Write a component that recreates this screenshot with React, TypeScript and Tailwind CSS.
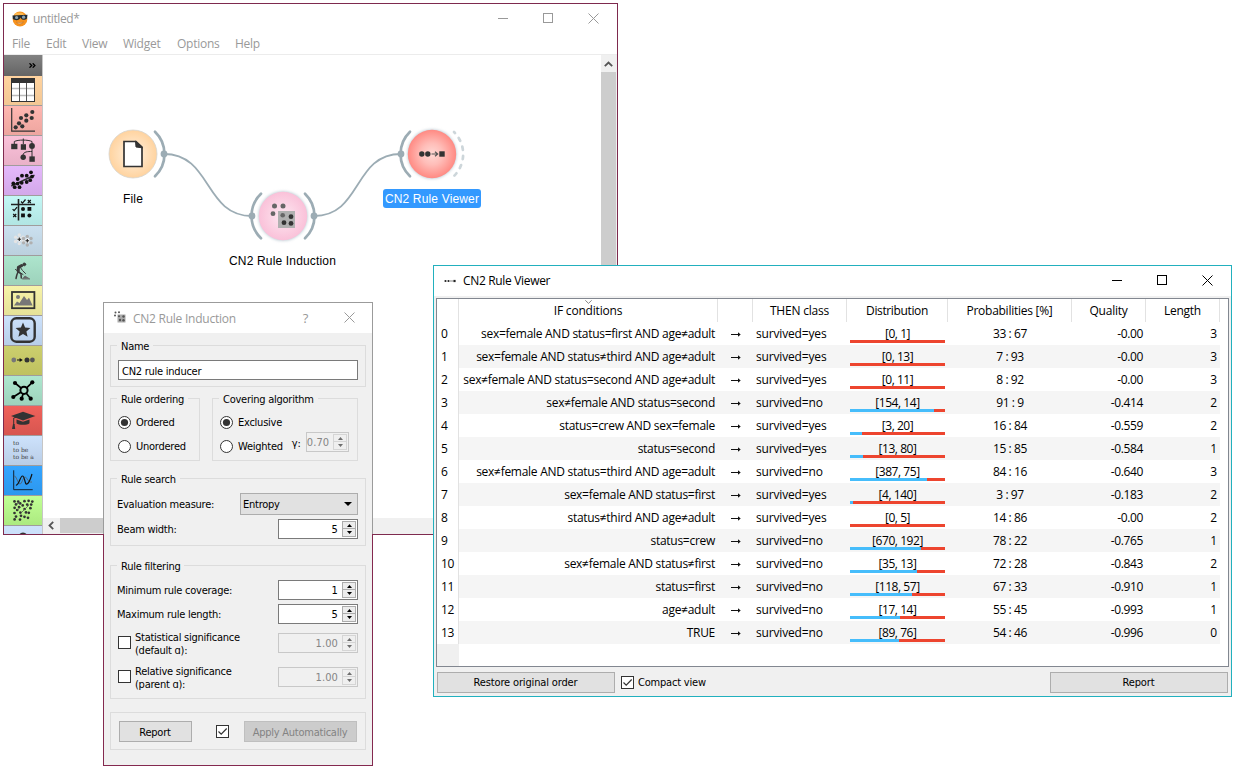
import type { ReactNode } from "react";

const OPEN = "font-['Open_Sans','Noto_Sans',sans-serif]";
const DEJA = "font-['DejaVu_Sans_Condensed','DejaVu_Sans',sans-serif]";

/* ---------- window chrome ---------- */

function CloseIcon() {
  return (
    <svg width="11" height="11" viewBox="0 0 11 11" stroke="currentColor" strokeWidth="1">
      <path d="M0.5 0.5L10.5 10.5M10.5 0.5L0.5 10.5" />
    </svg>
  );
}

function CaptionButtons() {
  return (
    <div className="flex items-center">
      <svg width="10" height="11" viewBox="0 0 10 11" className="mr-[35px]">
        <rect x="0" y="5" width="10" height="1" fill="currentColor" />
      </svg>
      <svg width="11" height="11" viewBox="0 0 11 11" className="mr-[34px]" fill="none" stroke="currentColor">
        <rect x="0.5" y="0.5" width="9" height="9" />
      </svg>
      <CloseIcon />
    </div>
  );
}

/* ---------- toolbox icons ---------- */

function Dots({ pts, r }: { pts: number[][]; r: number }) {
  return (
    <>
      {pts.map(([x, y], i) => (
        <circle key={i} cx={x} cy={y} r={r} />
      ))}
    </>
  );
}

function Flower({ x, y, fill }: { x: number; y: number; fill: string }) {
  return (
    <g>
      {[30, 90, 150, 210, 270, 330].map((a) => (
        <circle
          key={a}
          cx={x + 4.3 * Math.cos((a * Math.PI) / 180)}
          cy={y + 4.3 * Math.sin((a * Math.PI) / 180)}
          r="1.7"
          fill={fill}
        />
      ))}
      <circle cx={x} cy={y} r="2.4" fill="#f2f2f2" />
      <path d={`M${x - 1.8} ${y}h3.6M${x} ${y - 1.8}v3.6`} stroke="#222" strokeWidth="1.1" />
    </g>
  );
}

const tools: { bg: string; icon: ReactNode }[] = [
  {
    bg: "from-[#ffd39f] to-[#f3c794]",
    icon: (
      <g>
        <rect x="7.5" y="2.5" width="23" height="23" fill="#fff" stroke="#333" />
        <rect x="7" y="2" width="24" height="5" fill="#333" />
        <path d="M8 12.5h22M8 19.5h22" stroke="#bbb" strokeWidth="1.6" />
        <path d="M15.5 7v18M22.5 7v18" stroke="#555" />
      </g>
    ),
  },
  {
    bg: "from-[#ffb7b1] to-[#eda59f]",
    icon: (
      <g fill="#333">
        <path d="M7.7 2v23.2H31" fill="none" stroke="#333" strokeWidth="1.2" />
        <Dots r={2.1} pts={[[28.3, 6], [22.3, 9.3], [27.7, 12], [17, 12], [22.3, 14.7], [15, 17.3], [11.7, 21.3], [18.3, 20.3]]} />
      </g>
    ),
  },
  {
    bg: "from-[#fac1d9] to-[#e9b1c8]",
    icon: (
      <g fill="#333">
        <path d="M10.3 8V5.5C14 3.6 24 3.6 28 5.5V8M19.3 2.5V8M28 13v8M28 15.5c-4 0-9 0-9 4" fill="none" stroke="#333" />
        <rect x="7.2" y="7.8" width="6.2" height="5.4" />
        <rect x="16.8" y="8.2" width="5.2" height="5.6" />
        <circle cx="28" cy="10" r="2.9" />
        <circle cx="19.2" cy="21.3" r="2.7" />
        <rect x="25.4" y="20.4" width="5.4" height="5.4" />
      </g>
    ),
  },
  {
    bg: "from-[#e4b8fb] to-[#d3a8ea]",
    icon: (
      <g fill="#111">
        <path d="M7.3 20L30.5 9.3" stroke="#333" strokeWidth="1.6" />
        <Dots r={1.9} pts={[[27, 6.3], [18, 9.7], [22.7, 9.7], [28, 10.6], [13.7, 13], [9.3, 17.4], [10.7, 21.2], [15.5, 21.2], [17.7, 16.8], [22.7, 16], [26.2, 14.2], [13.6, 17.6]]} />
      </g>
    ),
  },
  {
    bg: "from-[#c3f7f5] to-[#b1e5e3]",
    icon: (
      <g fill="#111">
        <path d="M7 8.5h24M14.5 3v21.5" stroke="#222" strokeWidth="1.6" />
        <path d="M17 5.5l1.5 1.6 3-3.6M8.6 13.1l1.5 1.6 3-3.6M23.8 4l3 3M26.8 4l-3 3M9.2 18l3 3M12.2 18l-3 3" fill="none" stroke="#111" strokeWidth="1.2" />
        <circle cx="19" cy="12.9" r="2" />
        <rect x="23.5" y="11" width="3.8" height="3.8" />
        <rect x="17.1" y="17.5" width="3.8" height="3.8" />
        <circle cx="25.4" cy="19.4" r="2" />
      </g>
    ),
  },
  {
    bg: "from-[#cbe0ef] to-[#bbd0de]",
    icon: (
      <g>
        <Flower x={15.3} y={13.3} fill="#e4e4e4" />
        <Flower x={23.3} y={14.7} fill="#b0b0b0" />
      </g>
    ),
  },
  {
    bg: "from-[#ade5cd] to-[#9dd2bb]",
    icon: (
      <g fill="none" stroke="#3a3a3a" strokeLinecap="round" strokeLinejoin="round">
        <circle cx="20.3" cy="8.4" r="1.4" fill="#3a3a3a" />
        <path d="M17.6 9.6L14.4 11.3L14.2 15.2" strokeWidth="3" />
        <path d="M14 16L12.800 19L12 22.500M14.500 16L17 18L17.300 22" strokeWidth="1.5" />
        <path d="M16 11L18.500 14.500L21.500 17.500M11.500 13.500L19 18.500" strokeWidth="1" />
        <path d="M18.500 22.800L21 20L25.500 22.800Z" fill="#666" stroke="#666" strokeWidth="0.8" />
      </g>
    ),
  },
  {
    bg: "from-[#f7f3a9] to-[#e6e298]",
    icon: (
      <g>
        <rect x="8" y="6" width="22.4" height="16.2" fill="none" stroke="#333" strokeWidth="1.8" />
        <circle cx="14" cy="11" r="2" fill="#777" />
        <path d="M10 19.5l3-4 2.5 1.6 4.5-7 3 3.8 2-2.2 3.6 7.8z" fill="#777" />
      </g>
    ),
  },
  {
    bg: "from-[#cde2fc] to-[#b7cee9]",
    icon: (
      <g>
        <rect x="7.3" y="2.3" width="23.4" height="23.4" rx="5" fill="none" stroke="#333" strokeWidth="2.4" />
        <path d="M19 6.6l2.1 4.9 5.3.5-4 3.5 1.2 5.2-4.6-2.8-4.6 2.8 1.2-5.2-4-3.5 5.3-.5z" fill="#333" />
      </g>
    ),
  },
  {
    bg: "from-[#cccf6e] to-[#bfc15f]",
    icon: (
      <g fill="#333">
        <circle cx="9.8" cy="14" r="2.4" fill="#777" />
        <path d="M13 13.4h2.6v-1.5l3.2 2.1-3.2 2.1v-1.5H13z" fill="#111" />
        <circle cx="23" cy="14" r="2.5" />
        <circle cx="28.4" cy="14" r="2.4" fill="#555" />
      </g>
    ),
  },
  {
    bg: "from-[#aee7cf] to-[#9dd3bc]",
    icon: (
      <g fill="#000">
        <path d="M11 7l9 7.3L28.3 6.3M9.3 21l10.7-6.7M17.7 22.7L20 14.3l6.7 8.4" fill="none" stroke="#000" strokeWidth="1.7" />
        <Dots r={2.1} pts={[[11, 7], [28.3, 6.3], [9.3, 21], [17.7, 22.7], [26.7, 22.7]]} />
        <circle cx="20" cy="14.3" r="3.6" fill="#a8dfc8" stroke="#000" strokeWidth="2" />
      </g>
    ),
  },
  {
    bg: "from-[#f0625b] to-[#d75650]",
    icon: (
      <g fill="#333">
        <path d="M7 10l12-4.2L31.3 10 19 14.4z" />
        <path d="M12.5 13.5L19 15.8l6.5-2.3v3.8c-2 2-11 2-13 0z" />
        <path d="M13 11L9.7 12v7" fill="none" stroke="#333" />
        <path d="M9 18h1.6l.6 5H8z" />
      </g>
    ),
  },
  {
    bg: "from-[#cde2fc] to-[#b9cde6]",
    icon: (
      <g fill="#444" className="font-['DejaVu_Serif','Liberation_Serif',serif] text-[6px]">
        <text x="9" y="9.3">to</text>
        <text x="9" y="15.8">to be</text>
        <text x="9" y="22.5">to be a</text>
      </g>
    ),
  },
  {
    bg: "from-[#35a5ff] to-[#2c97ee]",
    icon: (
      <g fill="none">
        <path d="M9.7 4.3v19.4h19" stroke="#123" />
        <path d="M10 10c2-1 4 8 6 8s3-7 5-7 3 6 7 5" stroke="#567" />
        <path d="M12 19c3 1 4-9 6.5-9s2 9 4.500 8S27 11 28 8" stroke="#111" strokeWidth="1.2" />
      </g>
    ),
  },
  {
    bg: "from-[#c1ff95] to-[#acea80]",
    icon: (
      <g fill="#333">
        <Dots r={1.35} pts={[[10.5, 5.4], [14.2, 5.6], [20.5, 5.2], [24.6, 4.8], [28.3, 5.6], [12, 8.4], [16.2, 7.4], [27.2, 8.6], [10.6, 11.8], [15, 11], [18.7, 9.4], [23.2, 8.6], [13.2, 14], [20.6, 13], [26.4, 12.2], [10.5, 17], [16.4, 16.6], [22, 16.4], [12, 20.6], [17, 19.8], [24.800, 16.8], [20.5, 20.8], [10.6, 23.4], [16, 23.6], [24, 21.8]]} />
        <path d="M12 8l4-1M13 14l4-3M21 13l4-4M17 17l4-4" stroke="#555" strokeWidth="0.8" />
      </g>
    ),
  },
  {
    bg: "from-[#cde2fc] to-[#c6dbf6]",
    icon: <circle cx="19" cy="10.500" r="4" fill="#333" />,
  },
];

/* ---------- main canvas window ---------- */

const menus = [
  ["File", "w-[34px]"],
  ["Edit", "w-[36px]"],
  ["View", "w-[41px]"],
  ["Widget", "w-[54px]"],
  ["Options", "w-[58px]"],
  ["Help", "w-[40px]"],
];

function Workflow() {
  return (
    <div className="relative flex-1 overflow-hidden bg-white">
      <svg width="558" height="463" viewBox="43 55 558 463" className="block max-w-none" fill="none">
        <defs>
          <radialGradient id="gFile">
            <stop offset="0" stopColor="#fff2e2" />
            <stop offset="1" stopColor="#ffd39f" />
          </radialGradient>
          <radialGradient id="gRule">
            <stop offset="0" stopColor="#fde8f1" />
            <stop offset="1" stopColor="#fac1d9" />
          </radialGradient>
          <radialGradient id="gView">
            <stop offset="0" stopColor="#ffd8d4" />
            <stop offset="0.45" stopColor="#ffbdb8" />
            <stop offset="1" stopColor="#ff8a83" />
          </radialGradient>
          <filter id="glow" x="-30%" y="-30%" width="160%" height="160%">
            <feGaussianBlur stdDeviation="1.6" />
          </filter>
        </defs>
        <g stroke="#9cacb4" strokeWidth="1.8">
          <path d="M164 154C212 154 204 216 252 216" />
          <path d="M314 216C362 216 353 154 401 154" />
        </g>
        <g stroke="#9cacb4" strokeWidth="2.7" strokeLinecap="round">
          <path d="M155 131.700A31 31 0 0 1 155 176.300" />
          <path d="M261 193.700A31 31 0 0 0 261 238.300" />
          <path d="M305 193.700A31 31 0 0 1 305 238.300" />
          <path d="M410 131.700A31 31 0 0 0 410 176.300" />
          <path d="M454 132A31 31 0 0 1 454 176" stroke="#cdd6da" strokeDasharray="3.2 6.1" strokeDashoffset="1.6" />
        </g>
        <g fill="#9cacb4">
          <circle cx="164" cy="154" r="3.400" />
          <circle cx="252" cy="216" r="3.400" />
          <circle cx="314" cy="216" r="3.400" />
          <circle cx="401" cy="154" r="3.400" />
        </g>
        <circle cx="283" cy="216" r="24.500" fill="#b9c7d0" filter="url(#glow)" />
        <circle cx="432" cy="154" r="24.500" fill="#b9c7d0" filter="url(#glow)" />
        <circle cx="133" cy="154" r="24" fill="url(#gFile)" stroke="#d6d4cf" strokeWidth="0.8" />
        <circle cx="283" cy="216" r="24.200" fill="url(#gRule)" />
        <circle cx="432" cy="154" r="24.200" fill="url(#gView)" />
        <path d="M124 141.500H136L142 147V166.500H124Z" fill="#fff" stroke="#333" strokeWidth="1.7" />
        <path d="M135.500 141L142.500 147.800L136 147Z" fill="#333" stroke="#333" />
        <rect x="278" y="211" width="17" height="17" fill="#b0b0b0" />
        <g fill="#666">
          <circle cx="274.500" cy="206" r="2.500" />
          <circle cx="283" cy="206" r="2.500" />
          <circle cx="273" cy="213.700" r="2.400" />
          <circle cx="282.700" cy="215.200" r="2.300" />
        </g>
        <g fill="#333">
          <circle cx="291" cy="216.700" r="2.400" />
          <circle cx="284" cy="222.700" r="2.400" />
          <circle cx="291" cy="223.400" r="2.400" />
          <circle cx="421.800" cy="154" r="2.700" />
          <circle cx="427.800" cy="154" r="2.700" />
          <rect x="439.300" y="151.300" width="5.400" height="5.400" />
        </g>
        <path d="M431.500 154H437.500M435 151.800L437.700 154L435 156.200" stroke="#555" strokeWidth="1.200" />
      </svg>
      <div className="absolute inset-0 font-['Liberation_Sans',Arial,sans-serif] text-[12px] leading-[19px] tracking-[0.16px] text-black">
        <div className="absolute top-[135px] left-[40px] w-[100px] text-center">File</div>
        <div className="absolute top-[197px] left-[169px] w-[141px] text-center">CN2 Rule Induction</div>
        <div className="absolute top-[134px] left-[340px] h-[19px] w-[98px] rounded-[3px] bg-[#3399ff] pt-px text-center text-white">CN2 Rule Viewer</div>
      </div>
    </div>
  );
}

function MainWindow() {
  return (
    <div className={`absolute top-[3px] left-[3px] flex h-[532px] w-[615px] flex-col border border-[#7e2a4e] bg-white text-[12px] text-[#999] ${OPEN}`}>
      <div className="flex h-[30px] shrink-0 items-center pr-[18px] pl-[8px]">
        <svg width="16" height="16" viewBox="0 0 16 16">
          <circle cx="8" cy="8" r="7.400" fill="#f6921e" />
          <ellipse cx="7" cy="3.400" rx="4.500" ry="2" fill="#ffb84d" />
          <path d="M0.500 4.500L15.500 3.700L15 7.500C13 9.500 9.500 9.300 8.500 6.500C7.500 9.800 3 10 0.800 7.800Z" fill="#222c33" />
          <circle cx="4.600" cy="6.500" r="1.600" fill="#8fa3ad" />
          <circle cx="11.600" cy="6.200" r="1.600" fill="#8fa3ad" />
          <path d="M4.500 11.300Q8 14.500 11.500 11.100Q8 12.300 4.500 11.300Z" fill="#fff3d6" stroke="#a8540c" strokeWidth="0.400" />
        </svg>
        <span className="ml-[5px] tracking-[-0.4px]">untitled*</span>
        <div className="ml-auto -mt-[1px]"><CaptionButtons /></div>
      </div>
      <div className="flex h-[21px] shrink-0 items-center border-b border-[#ececec] pl-[8px] tracking-[-0.25px]">
        {menus.map(([m, w]) => (
          <span key={m} className={w}>{m}</span>
        ))}
      </div>
      <div className="flex min-h-0 flex-1">
        <div className="flex w-[39px] shrink-0 flex-col overflow-hidden border-r border-[#c6c6c6]">
          <div className="flex h-[21px] shrink-0 items-center justify-end bg-linear-to-b from-[#828282] to-[#646464] pr-[6px]">
            <svg width="7" height="5" viewBox="0 0 7 5" fill="none" stroke="#000" strokeWidth="1.300">
              <path d="M0.500 0.300L2.700 2.500L0.500 4.700M3.700 0.300L5.900 2.500L3.700 4.700" />
            </svg>
          </div>
          {tools.map((t, i) => (
            <div key={i} className={`h-[30px] shrink-0 border-b border-[#a09c9c] bg-linear-to-b ${t.bg}`}>
              <svg width="38" height="29" viewBox="0 0 38 29" className="block">{t.icon}</svg>
            </div>
          ))}
        </div>
        <div className="flex min-w-0 flex-1 flex-col">
          <div className="flex min-h-0 flex-1">
            <Workflow />
            <div className="w-[16px] shrink-0 border-r border-[#f0f0f0] bg-[#cdcdcd]">
              <div className="flex h-[17px] items-center justify-center bg-[#f0f0f0]">
                <svg width="9" height="6" viewBox="0 0 9 6" fill="none" stroke="#555" strokeWidth="1.800">
                  <path d="M0.800 5.200L4.500 1.500L8.200 5.200" />
                </svg>
              </div>
            </div>
          </div>
          <div className="flex h-[16px] shrink-0 border-b border-[#f0f0f0] bg-[#f0f0f0]">
            <div className="flex w-[17px] items-center justify-center pr-[2px]">
              <svg width="6" height="9" viewBox="0 0 6 9" fill="none" stroke="#555" strokeWidth="1.800">
                <path d="M5.200 0.800L1.500 4.500L5.200 8.200" />
              </svg>
            </div>
            <div className="w-[280px] bg-[#cdcdcd]" />
          </div>
        </div>
      </div>
    </div>
  );
}

/* ---------- form controls ---------- */

function Group({ title, className, children }: { title?: string; className: string; children: ReactNode }) {
  return (
    <div className={`border border-[#dcdcdc] ${className}`}>
      {title && (
        <div className="-mt-[7px] mb-[-8px] ml-[6px] flex h-[15px]">
          <span className="bg-[#f0f0f0] px-[4px] leading-[15px]">{title}</span>
        </div>
      )}
      {children}
    </div>
  );
}

function Spin({ value, disabled, className = "w-[80px]" }: { value: string; disabled?: boolean; className?: string }) {
  const tone = disabled ? "border-[#c8c8c8] text-[#858585] bg-[#f0f0f0]" : "border-[#7a7a7a] text-black bg-white";
  const btn = disabled ? "border-[#d5d5d5] bg-[#efefef]" : "border-[#acacac] bg-[#ececec]";
  const arrow = disabled ? "#6e6e6e" : "#000";
  return (
    <div className={`flex h-[20px] shrink-0 items-center border pr-[1px] ${tone} ${className}`}>
      <span className="flex-1 pt-px pr-[4px] text-right tracking-[0.1px]">{value}</span>
      <div className="flex w-[14px] flex-col">
        <div className={`flex h-[8px] items-center justify-center border ${btn}`}>
          <svg width="5" height="3" viewBox="0 0 5 3"><path d="M0 3L2.500 0L5 3Z" fill={arrow} /></svg>
        </div>
        <div className={`flex h-[8px] items-center justify-center border border-t-0 ${btn}`}>
          <svg width="5" height="3" viewBox="0 0 5 3"><path d="M0 0L2.500 3L5 0Z" fill={arrow} /></svg>
        </div>
      </div>
    </div>
  );
}

function Check({ on }: { on?: boolean }) {
  return (
    <svg width="13" height="13" viewBox="0 0 13 13" fill="none" className="shrink-0">
      <rect x="0.500" y="0.500" width="12" height="12" fill="#fff" stroke="#333" />
      {on && <path d="M2.500 6.500L5.200 9.200L10.700 3.500" stroke="#333" strokeWidth="1.200" />}
    </svg>
  );
}

function Radio({ label, on }: { label: string; on?: boolean }) {
  return (
    <div className="flex h-[14px] items-center">
      <svg width="13" height="13" viewBox="0 0 13 13" className="mr-[5px] shrink-0">
        <circle cx="6.500" cy="6.500" r="6" fill="#fff" stroke="#333" />
        {on && <circle cx="6.500" cy="6.500" r="3.600" fill="#333" />}
      </svg>
      <span>{label}</span>
    </div>
  );
}

function Button({ children, className, disabled }: { children: ReactNode; className: string; disabled?: boolean }) {
  const tone = disabled ? "border-[#bfbfbf] bg-[#cccccc] text-[#838383]" : "border-[#adadad] bg-[#e1e1e1] text-black";
  return <div className={`flex h-[21px] items-center justify-center border pt-[2px] pr-px ${tone} ${className}`}>{children}</div>;
}

/* ---------- rule induction dialog ---------- */

function InductionDialog() {
  return (
    <div className="absolute top-[302px] left-[103px] h-[464px] w-[270px] bg-linear-to-b from-[#9b9b9b] from-50% to-[#84294f] to-50% p-px">
      <div className={`flex h-full flex-col bg-[#f0f0f0] text-[11px] leading-[13px] tracking-[-0.25px] text-black ${DEJA}`}>
        <div className={`flex h-[30px] shrink-0 items-center bg-white pr-[17px] pl-[11px] text-[12px] text-[#999] ${OPEN}`}>
          <svg width="12" height="12" viewBox="0 0 12 12" fill="#555" className="-mt-[2px] -ml-px">
            <rect x="3.500" y="3.500" width="8" height="8" fill="#aaa" />
            <circle cx="1.500" cy="1.500" r="1" /><circle cx="5" cy="1.200" r="1" /><circle cx="1" cy="4.500" r="1" />
            <circle cx="5" cy="5.200" r="1" /><circle cx="9.500" cy="5.500" r="1.200" /><circle cx="6" cy="9" r="1.200" /><circle cx="9.500" cy="9.300" r="1.200" />
          </svg>
          <span className="ml-[7px] tracking-[-0.25px]">CN2 Rule Induction</span>
          <span className="ml-auto mr-[36px] text-[13px]">?</span>
          <div className="-mt-[2px]"><CloseIcon /></div>
        </div>
        <div className="flex flex-col pl-[6px]">
          <Group title="Name" className="mt-[12px] h-[42px] w-[256px]">
            <div className="mt-[14px] ml-[7px] flex h-[20px] w-[240px] items-center border border-[#7a7a7a] bg-white pt-[2px] pl-[3px]">CN2 rule inducer</div>
          </Group>
          <div className="mt-[11px] flex gap-[12px]">
            <Group title="Rule ordering" className="h-[63px] w-[90px]">
              <div className="mt-[16px] ml-[7px] flex flex-col gap-[10px]">
                <Radio label="Ordered" on />
                <Radio label="Unordered" />
              </div>
            </Group>
            <Group title="Covering algorithm" className="h-[63px] w-[146px]">
              <div className="mt-[16px] ml-[7px] flex flex-col gap-[7px]">
                <Radio label="Exclusive" on />
                <div className="flex h-[20px] items-center">
                  <Radio label="Weighted" />
                  <span className="ml-[9px] -mt-[6px] w-[14px] shrink-0">γ:</span>
                  <div className="-mt-[8px]"><Spin value="0.70" disabled className="w-[43px]" /></div>
                </div>
              </div>
            </Group>
          </div>
          <Group title="Rule search" className="mt-[17px] h-[68px] w-[256px]">
            <div className="mt-[14px] ml-[6px] w-[241px]">
              <div className="flex h-[22px] items-center justify-between">
                <span>Evaluation measure:</span>
                <div className="flex h-[22px] w-[118px] items-center justify-between border border-[#adadad] bg-[#e1e1e1] pr-[5px] pl-[2px]">
                  <span>Entropy</span>
                  <svg width="8" height="4" viewBox="0 0 8 4"><path d="M0 0H8L4 4Z" /></svg>
                </div>
              </div>
              <div className="mt-[4px] flex items-center justify-between">
                <span>Beam width:</span>
                <Spin value="5" />
              </div>
            </div>
          </Group>
          <Group title="Rule filtering" className="mt-[19px] h-[134px] w-[256px]">
            <div className="mt-[14px] ml-[6px] w-[241px]">
              <div className="flex items-center justify-between"><span>Minimum rule coverage:</span><Spin value="1" /></div>
              <div className="mt-[4px] flex items-center justify-between"><span>Maximum rule length:</span><Spin value="5" /></div>
              <div className="mt-[6px] flex h-[28px] items-center pl-px">
                <div className="-mt-[3px]"><Check /></div>
                <span className="ml-[4px] w-[143px] whitespace-nowrap">Statistical significance<br />(default ɑ):</span>
                <div className="-mt-[2px]"><Spin value="1.00" disabled /></div>
              </div>
              <div className="mt-[6px] flex h-[28px] items-center pl-px">
                <div className="-mt-[3px]"><Check /></div>
                <span className="ml-[4px] w-[143px] whitespace-nowrap">Relative significance<br />(parent ɑ):</span>
                <div className="-mt-[2px]"><Spin value="1.00" disabled /></div>
              </div>
            </div>
          </Group>
          <Group className="mt-[13px] flex h-[38px] w-[256px] items-center pl-[8px]">
            <Button className="w-[73px]">Report</Button>
            <div className="mr-[15px] ml-[24px]"><Check on /></div>
            <Button className="w-[113px]" disabled>Apply Automatically</Button>
          </Group>
        </div>
      </div>
    </div>
  );
}

/* ---------- rule viewer window ---------- */

type Rule = [string, string, [number, number], string, string, number];

const rules: Rule[] = [
  ["sex=female AND status=first AND age≠adult", "yes", [0, 1], "33 : 67", "-0.00", 3],
  ["sex=female AND status≠third AND age≠adult", "yes", [0, 13], "7 : 93", "-0.00", 3],
  ["sex≠female AND status=second AND age≠adult", "yes", [0, 11], "8 : 92", "-0.00", 3],
  ["sex≠female AND status=second", "no", [154, 14], "91 : 9", "-0.414", 2],
  ["status=crew AND sex=female", "yes", [3, 20], "16 : 84", "-0.559", 2],
  ["status=second", "yes", [13, 80], "15 : 85", "-0.584", 1],
  ["sex≠female AND status=third AND age=adult", "no", [387, 75], "84 : 16", "-0.640", 3],
  ["sex=female AND status=first", "yes", [4, 140], "3 : 97", "-0.183", 2],
  ["status≠third AND age≠adult", "yes", [0, 5], "14 : 86", "-0.00", 2],
  ["status=crew", "no", [670, 192], "78 : 22", "-0.765", 1],
  ["sex≠female AND status≠first", "no", [35, 13], "72 : 28", "-0.843", 2],
  ["status=first", "no", [118, 57], "67 : 33", "-0.910", 1],
  ["age≠adult", "no", [17, 14], "55 : 45", "-0.993", 1],
  ["TRUE", "no", [89, 76], "54 : 46", "-0.996", 0],
];

const COLS = "grid grid-cols-[22px_259px_35px_94px_101px_124px_74px_74px]";

function RuleTable() {
  const head = "flex items-center justify-center border-r border-[#e2e2e2]";
  return (
    <div className={`mx-[2px] mt-[2px] h-[369px] shrink-0 border border-[#828790] bg-white text-[12px] leading-[23px] text-black ${OPEN}`}>
      <div className={`h-[23px] ${COLS}`}>
        <div className={head} />
        <div className={`relative tracking-[-0.2px] ${head}`}>
          IF conditions
          <svg width="7" height="4" viewBox="0 0 7 4" className="absolute top-px left-[126px]" fill="none" stroke="#888">
            <path d="M0.300 0.300L3.500 3.400L6.700 0.300" />
          </svg>
        </div>
        <div className={head} />
        <div className={`tracking-[-0.2px] ${head}`}>THEN class</div>
        <div className={`tracking-[-0.36px] ${head}`}>Distribution</div>
        <div className={`tracking-[-0.26px] ${head}`}>Probabilities [%]</div>
        <div className={`tracking-[-0.26px] ${head}`}>Quality</div>
        <div className={`tracking-[-0.26px] ${head}`}>Length</div>
      </div>
      {rules.map(([cond, cls, dist, prob, quality, length], i) => {
        const filled = (dist[0] / (dist[0] + dist[1])) * 91.5;
        return (
          <div key={i} className={`h-[23px] ${COLS}`}>
            <div className="border-r border-[#e2e2e2] bg-white pl-[4px] tracking-[-0.4px]">{i}</div>
            <div className={`col-span-7 grid grid-cols-[259px_35px_94px_101px_124px_74px_74px] ${i % 2 ? "bg-[#f5f5f5]" : "bg-white"}`}>
              <div className="pr-[3px] text-right tracking-[-0.28px] whitespace-nowrap">{cond}</div>
              <div className="flex items-center justify-center">
                <svg width="10" height="5" viewBox="0 0 10 5" className="mt-[2px]">
                  <path d="M0 2H7V0.300L9.700 2.500L7 4.700V3H0Z" fill="#111" />
                </svg>
              </div>
              <div className="pl-[3px] tracking-[-0.16px]">survived={cls}</div>
              <div className="relative text-center tracking-[-0.45px]">
                [{dist[0]}, {dist[1]}]
                <div className="absolute top-[18px] left-[3px] flex h-[3px] w-[95px] bg-[#ed452f]">
                  <div className="bg-[#46bdfb]" style={{ width: filled }} />
                </div>
              </div>
              <div className="text-center tracking-[-0.4px]">{prob}</div>
              <div className="pr-[3px] text-right tracking-[-0.35px]">{quality}</div>
              <div className="pr-[3px] text-right">{length}</div>
            </div>
          </div>
        );
      })}
      <div className="h-[22px] w-[22px] bg-[#f0f0f0]" />
    </div>
  );
}

function ViewerWindow() {
  return (
    <div className="absolute top-[265px] left-[433px] flex h-[432px] w-[799px] flex-col border border-[#22b0be] bg-[#f0f0f0] text-black">
      <div className={`flex h-[30px] shrink-0 items-center bg-white pr-[18px] pl-[10px] text-[12px] ${OPEN}`}>
        <svg width="12" height="4" viewBox="0 0 12 4" fill="#222">
          <circle cx="1.500" cy="2" r="1.100" />
          <circle cx="4.500" cy="2" r="1.100" />
          <rect x="6" y="1.500" width="3" height="1" fill="#888" />
          <rect x="9.400" y="0.900" width="2.200" height="2.200" />
        </svg>
        <span className="ml-[7px] tracking-[-0.33px]">CN2 Rule Viewer</span>
        <div className="ml-auto -mt-[1px]"><CaptionButtons /></div>
      </div>
      <RuleTable />
      <div className={`mt-[5px] flex items-center pr-[3px] pl-[3px] text-[11px] tracking-[-0.15px] ${DEJA}`}>
        <Button className="w-[178px]">Restore original order</Button>
        <div className="mr-[4px] ml-[6px]"><Check on /></div>
        <span className="pt-[2px] tracking-[-0.2px]">Compact view</span>
        <Button className="ml-auto w-[178px]">Report</Button>
      </div>
    </div>
  );
}

export default function App() {
  return (
    <div className="relative h-[769px] w-[1235px] overflow-hidden bg-white">
      <MainWindow />
      <InductionDialog />
      <ViewerWindow />
    </div>
  );
}
